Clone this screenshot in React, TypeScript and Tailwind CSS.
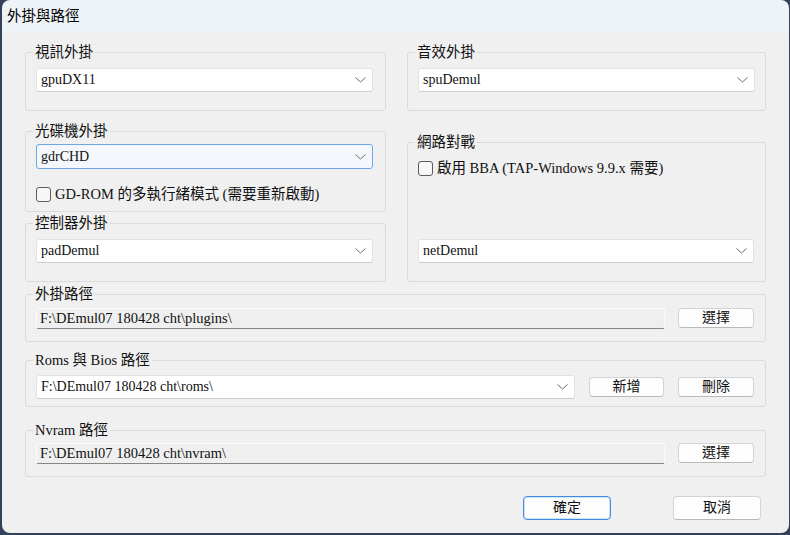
import React from 'react';

const SERIF = "font-['Liberation_Serif','Noto_Sans_CJK_TC',serif]";

const Chevron = () => (
  <svg width="11" height="6" viewBox="0 0 11 6" className="shrink-0">
    <polyline points="0.5,0.5 5.5,5 10.5,0.5" fill="none" stroke="#6b6b6b" strokeWidth="1" />
  </svg>
);

const Group = ({ label, className, children }: { label: string; className: string; children?: React.ReactNode }) => (
  <div className={`border border-[#dadada] rounded-[3px] ${className}`}>
    <div className="-mt-[11px] ml-[7px] px-[2px] w-fit bg-[#f0f0f0] text-[14.5px] leading-[20px] text-[#111]">{label}</div>
    {children}
  </div>
);

const Combo = ({ value, focused, className }: { value: string; focused?: boolean; className: string }) => (
  <div
    className={`h-[24px] flex items-center justify-between pl-[4px] pr-[6px] rounded-[3px] border ${
      focused ? 'border-[#6aa9e6] bg-[#f4f8fd]' : 'border-[#e2e2e2] border-b-[#cdcdcd] bg-white'
    } ${className}`}
  >
    <span className="text-[14px] leading-none text-[#111]">{value}</span>
    <Chevron />
  </div>
);

const Field = ({ value }: { value: string }) => (
  <div className="h-[21px] w-[629px] flex items-center pl-[3px] bg-[#efefef] border border-[#fafafa] border-b-[#858585] rounded-[2px] text-[14.5px] text-[#111]">
    {value}
  </div>
);

const Btn = ({ children, className }: { children: React.ReactNode; className: string }) => (
  <button className={`h-[20px] flex items-center justify-center bg-[#fdfdfd] border border-[#d3d3d3] border-b-[#b9b9b9] rounded-[4px] text-[14px] leading-none text-[#111] ${className}`}>
    {children}
  </button>
);

const Check = ({ label }: { label: string }) => (
  <div className="h-[20px] flex items-center gap-[4px] ml-[10px]">
    <div className="w-[15px] h-[15px] rounded-[3px] border border-[#5c5c5c] bg-[#f7f7f7]" />
    <span className="text-[14.5px] leading-none text-[#111]">{label}</span>
  </div>
);

export default function App() {
  return (
    <div className={`w-[790px] h-[535px] bg-[#34415a] pl-[2px] pr-[1px] pb-[2px] flex ${SERIF}`}>
      <div className="flex-1 flex flex-col rounded-[8px] overflow-hidden">
        {/* Title bar */}
        <div className="h-[33px] bg-[#eef3f8] flex items-center pl-[5px] text-[14.5px] text-black">外掛與路徑</div>

        {/* Body */}
        <div className="flex-1 bg-[#f0f0f0] pt-[19px] px-[23px] flex flex-col">
          <div className="grid grid-cols-[361px_359px] gap-x-[21px]">
            <div className="flex flex-col">
              <Group label="視訊外掛" className="h-[59px]">
                <Combo value="gpuDX11" className="mt-[6px] ml-[10px] w-[337px]" />
              </Group>
              <Group label="光碟機外掛" className="mt-[20px] h-[81px]">
                <Combo value="gdrCHD" focused className="mt-[3px] ml-[10px] w-[337px] h-[25px]" />
                <div className="mt-[15px]">
                  <Check label="GD-ROM 的多執行緒模式 (需要重新啟動)" />
                </div>
              </Group>
              <Group label="控制器外掛" className="mt-[11px] h-[59px]">
                <Combo value="padDemul" className="mt-[6px] ml-[10px] w-[337px]" />
              </Group>
            </div>
            <div className="flex flex-col">
              <Group label="音效外掛" className="h-[59px]">
                <Combo value="spuDemul" className="mt-[6px] ml-[10px] w-[337px]" />
              </Group>
              <Group label="網路對戰" className="mt-[31px] h-[140px]">
                <div className="mt-[6px]">
                  <Check label="啟用 BBA (TAP-Windows 9.9.x 需要)" />
                </div>
                <Combo value="netDemul" className="mt-[61px] ml-[10px] w-[336px]" />
              </Group>
            </div>
          </div>

          <Group label="外掛路徑" className="mt-[12px] h-[48px]">
            <div className="mt-[4px] ml-[10px] flex items-start gap-[13px]">
              <Field value={'F:\\DEmul07 180428 cht\\plugins\\'} />
              <Btn className="w-[76px]">選擇</Btn>
            </div>
          </Group>

          <Group label="Roms 與 Bios 路徑" className="mt-[18px] h-[47px]">
            <div className="mt-[5px] ml-[10px] flex items-center">
              <Combo value={'F:\\DEmul07 180428 cht\\roms\\'} className="w-[539px]" />
              <Btn className="ml-[14px] w-[75px]">新增</Btn>
              <Btn className="ml-[14px] w-[76px]">刪除</Btn>
            </div>
          </Group>

          <Group label="Nvram 路徑" className="mt-[23px] h-[47px]">
            <div className="mt-[3px] ml-[10px] flex items-start gap-[13px]">
              <Field value={'F:\\DEmul07 180428 cht\\nvram\\'} />
              <Btn className="w-[76px]">選擇</Btn>
            </div>
          </Group>

          <div className="mt-[19px] flex justify-end gap-[62px] pr-[5px]">
            <button className="w-[88px] h-[24px] flex items-center justify-center rounded-[4px] bg-[#fdfdfd] border border-[#3d8ee0] shadow-[inset_0_0_0_1px_#cfe3f7] text-[14px] leading-none text-[#111]">
              確定
            </button>
            <button className="w-[88px] h-[24px] flex items-center justify-center rounded-[4px] bg-[#fdfdfd] border border-[#d3d3d3] border-b-[#b9b9b9] text-[14px] leading-none text-[#111]">
              取消
            </button>
          </div>
        </div>
      </div>
    </div>
  );
}
